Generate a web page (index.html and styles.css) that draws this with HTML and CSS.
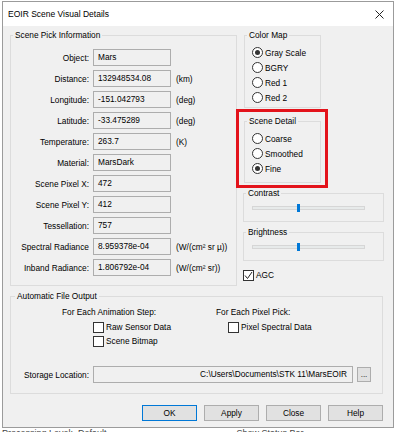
FILE: index.html
```html
<!DOCTYPE html>
<html lang="en">
<head>
  <meta charset="UTF-8" />
  <title>EOIR Scene Visual Details</title>
  <link rel="stylesheet" href="styles.css">
</head>
<body>

  <div class="window">
    <div class="titlebar">
      <span class="title">EOIR Scene Visual Details</span>
      <svg class="close" width="9" height="9" viewBox="0 0 9 9"><path d="M0.5 0.5L8.5 8.5M8.5 0.5L0.5 8.5" stroke="#222" stroke-width="1"/></svg>
    </div>

    <div class="content">
      <div class="top">

        <!-- left: pick info -->
        <fieldset class="pick">
          <legend>Scene Pick Information</legend>
          <div class="rows">
            <label>Object:</label><div class="field">Mars</div><span></span>
            <label>Distance:</label><div class="field">132948534.08</div><span class="unit">(km)</span>
            <label>Longitude:</label><div class="field">-151.042793</div><span class="unit">(deg)</span>
            <label>Latitude:</label><div class="field">-33.475289</div><span class="unit">(deg)</span>
            <label>Temperature:</label><div class="field">263.7</div><span class="unit">(K)</span>
            <label>Material:</label><div class="field">MarsDark</div><span></span>
            <label>Scene Pixel X:</label><div class="field">472</div><span></span>
            <label>Scene Pixel Y:</label><div class="field">412</div><span></span>
            <label>Tessellation:</label><div class="field">757</div><span></span>
            <label>Spectral Radiance</label><div class="field">8.959378e-04</div><span class="unit">(W/(cm² sr µ))</span>
            <label>Inband Radiance:</label><div class="field">1.806792e-04</div><span class="unit">(W/(cm² sr))</span>
          </div>
        </fieldset>

        <!-- right: display options -->
        <div class="side">
          <fieldset class="narrow">
            <legend>Color Map</legend>
            <div class="radios">
              <div class="radio"><span class="dot on"></span>Gray Scale</div>
              <div class="radio"><span class="dot"></span>BGRY</div>
              <div class="radio"><span class="dot"></span>Red 1</div>
              <div class="radio"><span class="dot"></span>Red 2</div>
            </div>
          </fieldset>

          <div class="highlight">
            <fieldset class="narrow">
              <legend>Scene Detail</legend>
              <div class="radios detail">
                <div class="radio"><span class="dot"></span>Coarse</div>
                <div class="radio"><span class="dot"></span>Smoothed</div>
                <div class="radio"><span class="dot on"></span>Fine</div>
              </div>
            </fieldset>
          </div>

          <fieldset class="wide first">
            <legend>Contrast</legend>
            <div class="slider"><div class="track"><div class="thumb"></div></div></div>
          </fieldset>

          <fieldset class="wide">
            <legend>Brightness</legend>
            <div class="slider"><div class="track"><div class="thumb"></div></div></div>
          </fieldset>

          <div class="check agc">
            <span class="box"><svg width="9" height="9" viewBox="0 0 9 9"><path d="M1 4.5L3.5 7.5L8 1" fill="none" stroke="#222" stroke-width="1"/></svg></span>AGC
          </div>
        </div>
      </div>

      <!-- file output -->
      <fieldset class="output">
        <legend>Automatic File Output</legend>
        <div class="cols">
          <div class="col step">
            <div class="head">For Each Animation Step:</div>
            <div class="check"><span class="box"></span>Raw Sensor Data</div>
            <div class="check"><span class="box"></span>Scene Bitmap</div>
          </div>
          <div class="col pixel">
            <div class="head">For Each Pixel Pick:</div>
            <div class="check"><span class="box"></span>Pixel Spectral Data</div>
          </div>
        </div>
        <div class="storage">
          <label>Storage Location:</label>
          <div class="field path">C:\Users\Documents\STK 11\MarsEOIR</div>
          <button class="browse">...</button>
        </div>
      </fieldset>

      <div class="buttons">
        <button class="default">OK</button>
        <button>Apply</button>
        <button>Close</button>
        <button>Help</button>
      </div>
    </div>
  </div>

  <div class="behind">
    <div class="behind-text"><span>Processing Level:&nbsp; Default</span><span class="right">Show Status Bar</span></div>
  </div>

</body>
</html>
```

FILE: styles.css
```css
body {
  margin: 0;
  background-color: #fff;
  font-family: "Liberation Sans", Arial, sans-serif;
  font-size: 8.3px;
  color: #000;
  overflow: hidden;
}
.window {
  margin: 1px 0 0 2px;
  width: 390px;
  height: 425px;
  border: 1px solid #9b9b9b;
  background-color: #f0f0f0;
}
.titlebar {
  height: 24px;
  background-color: #fff;
  display: flex;
  align-items: center;
  justify-content: space-between;
  padding: 0 9px 0 5px;
}
.title {
  font-size: 8.5px;
}
.close {
  margin-top: 1px;
}
.content {
  padding: 3px 0 0 7px;
}
.top {
  display: flex;
  align-items: flex-start;
}

fieldset {
  margin: 0;
  padding: 0;
  min-width: 0;
  border: 1px solid #dcdcdc;
  box-sizing: border-box;
}
legend {
  margin-left: 2px;
  padding: 0 2px;
  line-height: 12px;
}

/* pick info */
.pick {
  width: 227px;
}
.rows {
  display: grid;
  grid-template-columns: 78px 78px 1fr;
  grid-auto-rows: 21px;
  column-gap: 4px;
  align-items: center;
  padding: 6px 0 7px 0;
}
.rows label {
  text-align: right;
  white-space: nowrap;
}
.unit {
  padding-left: 1px;
  white-space: nowrap;
}
.field {
  height: 17px;
  box-sizing: border-box;
  border: 1px solid #adadad;
  background-color: #f0f0f0;
  padding-left: 4px;
  line-height: 15px;
  white-space: nowrap;
  overflow: hidden;
}

/* right column */
.side {
  margin-left: 6px;
  width: 141px;
}
.narrow {
  margin-left: 1px;
  width: 77px;
}
.radios {
  padding: 4px 0 2px 7px;
}
.radios.detail {
  padding-bottom: 6px;
}
.radio {
  display: flex;
  align-items: center;
  height: 15px;
  gap: 2px;
}
.dot {
  width: 11px;
  height: 11px;
  box-sizing: border-box;
  border: 1px solid #333;
  border-radius: 50%;
  background-color: #fff;
  display: flex;
  align-items: center;
  justify-content: center;
}
.dot.on::after {
  content: "";
  width: 5px;
  height: 5px;
  border-radius: 50%;
  background-color: #333;
}
.highlight {
  margin: 1px 0 0 -7px;
  width: 92px;
  box-sizing: border-box;
  border: 3px solid #e3131b;
  padding: 3px 4px 2px 5px;
}
.highlight .narrow {
  margin-left: 0;
}
.wide {
  width: 141px;
  margin-top: 4px;
}
.wide.first {
  margin-top: -1px;
}
.slider {
  height: 12px;
  padding: 3px 0 7px 8px;
  display: flex;
  align-items: center;
}
.track {
  width: 113px;
  height: 4px;
  box-sizing: border-box;
  background-color: #e7eaea;
  border: 1px solid #d6d6d6;
}
.thumb {
  width: 3px;
  height: 8px;
  margin: -3px 0 0 44px;
  background-color: #0078d7;
}

.check {
  display: flex;
  align-items: center;
  height: 14px;
  gap: 2px;
  white-space: nowrap;
}
.box {
  flex: none;
  width: 11px;
  height: 11px;
  box-sizing: border-box;
  border: 1px solid #333;
  background-color: #fff;
  display: flex;
  align-items: center;
  justify-content: center;
}
.agc {
  margin-top: 8px;
  height: 12px;
}

/* file output */
.output {
  margin-top: 4px;
  width: 373px;
}
.output legend {
  margin-left: 4px;
}
.cols {
  display: flex;
  padding-top: 4px;
}
.col .head {
  height: 12px;
  line-height: 12px;
  margin-bottom: 2px;
  white-space: nowrap;
}
.step {
  width: 205px;
  padding-left: 51px;
  box-sizing: border-box;
}
.step .check {
  margin-left: 31px;
}
.pixel .check {
  margin-left: 12px;
}
.storage {
  display: flex;
  align-items: center;
  margin-top: 18px;
  padding: 0 0 10px 13px;
}
.storage label {
  width: 69px;
}
.path {
  width: 260px;
  text-align: right;
  padding: 0 5px 0 0;
}
.browse {
  margin-left: 4px;
  width: 14px;
  height: 15px;
  padding: 0;
  border: 1px solid #adadad;
  background-color: #e1e1e1;
  font-family: inherit;
  font-size: 8px;
  line-height: 10px;
}

.buttons {
  display: flex;
  justify-content: flex-end;
  gap: 7px;
  margin-top: 11px;
  padding-right: 10px;
}
.buttons button {
  width: 55px;
  height: 16px;
  padding: 0;
  border: 1px solid #adadad;
  background-color: #e1e1e1;
  font-family: inherit;
  font-size: 8.3px;
  color: #000;
}
.buttons .default {
  border-color: #0078d7;
}

.behind {
  height: 4px;
  overflow: hidden;
}
.behind-text {
  margin-top: 1px;
  padding-left: 2px;
  font-size: 9px;
  line-height: 9px;
  color: #444;
  white-space: nowrap;
}
.behind-text .right {
  margin-left: 130px;
}
```
